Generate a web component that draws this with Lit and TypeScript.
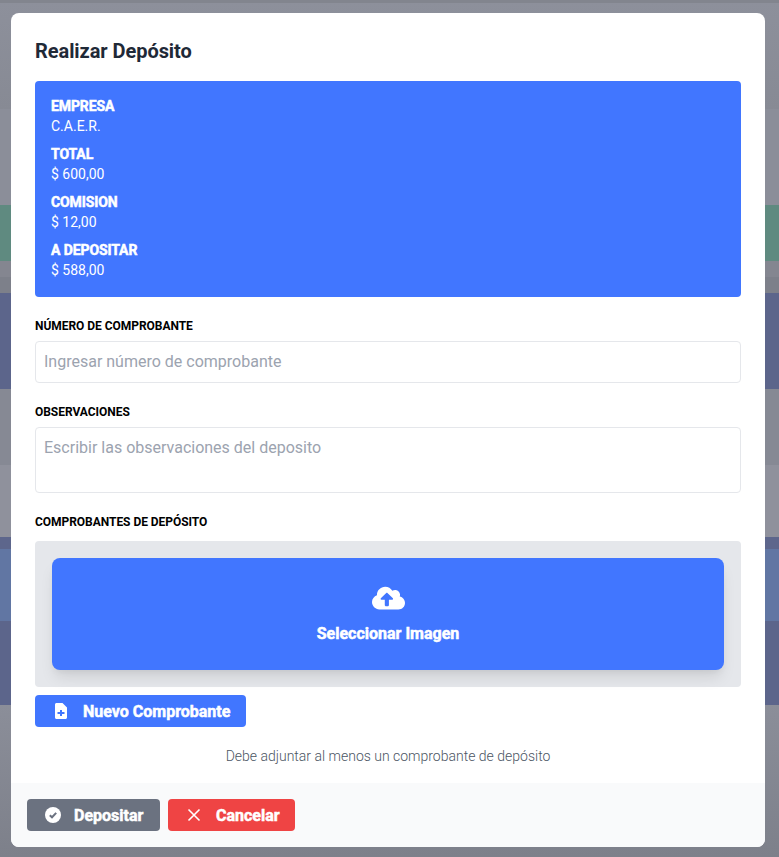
import { LitElement, html, css } from "lit";
import { customElement } from "lit/decorators.js";

const stripes = [
  { h: 3, c: "#82858e" },
  { h: 106, c: "linear-gradient(#8d909b, #878a94)" },
  { h: 96, c: "#8b8e99" },
  { h: 56, c: "#5f8a80" },
  { h: 16, c: "#848690" },
  { h: 16, c: "#7d808a" },
  { h: 96, c: "#5c658b" },
  { h: 76, c: "#868994" },
  { h: 72, c: "#8f919c" },
  { h: 12, c: "#5d668c" },
  { h: 72, c: "#6176a3" },
  { h: 84, c: "#5c658b" },
  { h: 152, c: "linear-gradient(#8b8e99, #7d808a)" },
];

const info = [
  ["EMPRESA", "C.A.E.R."],
  ["TOTAL", "$ 600,00"],
  ["COMISION", "$ 12,00"],
  ["A DEPOSITAR", "$ 588,00"],
];

@customElement("app-root")
export class AppRoot extends LitElement {
  static styles = css`
    :host {
      display: block;
      position: relative;
      height: 857px;
      overflow: hidden;
      font-family: Roboto, "Liberation Sans", sans-serif;
      color: #1f2937;
    }
    .backdrop {
      display: flex;
      flex-direction: column;
      height: 100%;
    }
    .modal {
      position: absolute;
      left: 11px;
      top: 13px;
      width: 754px;
      height: 834px;
      display: flex;
      flex-direction: column;
      background: #fff;
      border-radius: 8px;
      overflow: hidden;
    }
    .body {
      flex: 1;
      display: flex;
      flex-direction: column;
      padding: 24px 24px 0;
    }
    h3 {
      margin: 0;
      font-size: 20px;
      line-height: 28px;
      font-weight: 700;
      letter-spacing: -0.06px;
      color: #1f2937;
    }
    .info {
      margin-top: 16px;
      height: 216px;
      box-sizing: border-box;
      padding: 15px 16px;
      background: #4176ff;
      border-radius: 4px;
      color: #fff;
      font-size: 14px;
      line-height: 20px;
    }
    .info-row {
      margin-bottom: 8px;
    }
    .info-row b {
      display: block;
      font-weight: 700;
      letter-spacing: -0.1px;
      -webkit-text-stroke: 0.5px #fff;
    }
    label {
      display: block;
      margin-top: 19px;
      font-size: 12px;
      line-height: 20px;
      font-weight: 700;
      letter-spacing: -0.04px;
      color: #000;
    }
    .field {
      margin-top: 5px;
      box-sizing: border-box;
      height: 42px;
      padding: 9px 8px;
      border: 1px solid #e5e7eb;
      border-radius: 4px;
      font-size: 16px;
      line-height: 22px;
      color: #9ca3af;
    }
    .field.area {
      height: 66px;
    }
    .drop {
      margin-top: 9px;
      padding: 17px;
      height: 146px;
      box-sizing: border-box;
      background: #e5e7eb;
      border-radius: 4px;
    }
    .pick {
      height: 112px;
      box-sizing: border-box;
      padding-top: 3px;
      display: flex;
      flex-direction: column;
      align-items: center;
      justify-content: center;
      gap: 11px;
      background: #4176ff;
      border-radius: 8px;
      box-shadow: 0 10px 15px -3px rgba(0, 0, 0, 0.1),
        0 4px 6px -2px rgba(0, 0, 0, 0.05);
      color: #fff;
      font-size: 16px;
      line-height: 24px;
      font-weight: 700;
      -webkit-text-stroke: 0.5px #fff;
    }
    .btn {
      display: inline-flex;
      align-items: center;
      height: 32px;
      box-sizing: border-box;
      border-radius: 4px;
      color: #fff;
      font-size: 16px;
      font-weight: 700;
      -webkit-text-stroke: 0.5px #fff;
    }
    .btn svg {
      flex: none;
      display: block;
    }
    .add {
      margin-top: 8px;
      align-self: flex-start;
      width: 211px;
      padding-left: 20px;
      gap: 16px;
      background: #4176ff;
    }
    .hint {
      margin-top: 19px;
      text-align: center;
      font-size: 14px;
      line-height: 20px;
      font-weight: 300;
      color: #4b5563;
    }
    .footer {
      display: flex;
      gap: 8px;
      height: 64px;
      box-sizing: border-box;
      padding: 16px;
      background: #f9fafb;
    }
    .send {
      width: 133px;
      padding-left: 18px;
      gap: 13px;
      background: #6b7280;
    }
    .cancel {
      width: 127px;
      padding-left: 18px;
      gap: 14px;
      background: #ef4444;
    }
  `;

  render() {
    return html`
      <div class="backdrop">
        ${stripes.map(
          (s) =>
            html`<div
              style="flex: none; height: ${s.h}px; background: ${s.c}"
            ></div>`
        )}
      </div>
      <div class="modal">
        <div class="body">
          <h3>Realizar Depósito</h3>
          <div class="info">
            ${info.map(
              ([k, v]) => html`
                <div class="info-row"><b>${k}</b>${v}</div>
              `
            )}
          </div>
          <label>NÚMERO DE COMPROBANTE</label>
          <div class="field">Ingresar número de comprobante</div>
          <label>OBSERVACIONES</label>
          <div class="field area">Escribir las observaciones del deposito</div>
          <label>COMPROBANTES DE DEPÓSITO</label>
          <div class="drop">
            <div class="pick">
              <svg width="33" height="26" viewBox="0 0 640 512" preserveAspectRatio="none" fill="#fff">
                <path
                  d="M537.6 226.6c4.1-10.7 6.4-22.4 6.4-34.6 0-53-43-96-96-96-19.7 0-38.1 6-53.3 16.2C367 64.2 315.3 32 256 32c-88.4 0-160 71.6-160 160 0 2.7.1 5.4.2 8.1C40.2 219.8 0 273.2 0 336c0 79.5 64.5 144 144 144h368c70.7 0 128-57.3 128-128 0-61.9-44-113.6-102.4-125.4zM393.4 288H328v112c0 8.8-7.2 16-16 16h-48c-8.8 0-16-7.2-16-16V288h-65.4c-14.3 0-21.4-17.2-11.3-27.3l105.4-105.4c6.2-6.2 16.4-6.2 22.6 0l105.4 105.4c10.1 10.1 2.9 27.3-11.3 27.3z"
                />
              </svg>
              <span>Seleccionar Imagen</span>
            </div>
          </div>
          <div class="btn add">
            <svg width="12" height="16" viewBox="0 0 384 512" fill="#fff">
              <path
                fill-rule="evenodd"
                d="M48 0H240L384 144V464C384 490 362 512 336 512H48C22 512 0 490 0 464V48C0 22 22 0 48 0ZM160 224V288H80V352H160V416H224V352H304V288H224V224Z"
              />
            </svg>
            <span>Nuevo Comprobante</span>
          </div>
          <div class="hint">Debe adjuntar al menos un comprobante de depósito</div>
        </div>
        <div class="footer">
          <div class="btn send">
            <svg width="16" height="16" viewBox="0 0 16 16">
              <circle cx="8" cy="8" r="8" fill="#fff" />
              <path d="M4.800 8.200L7 10.300L11.200 5.900" fill="none" stroke="#6b7280" stroke-width="2" />
            </svg>
            <span>Depositar</span>
          </div>
          <div class="btn cancel">
            <svg width="16" height="16" viewBox="0 0 16 16" fill="none" stroke="#fff" stroke-width="1.6">
              <path d="M2.500 2.500l11 11M13.500 2.500l-11 11" />
            </svg>
            <span>Cancelar</span>
          </div>
        </div>
      </div>
    `;
  }
}
